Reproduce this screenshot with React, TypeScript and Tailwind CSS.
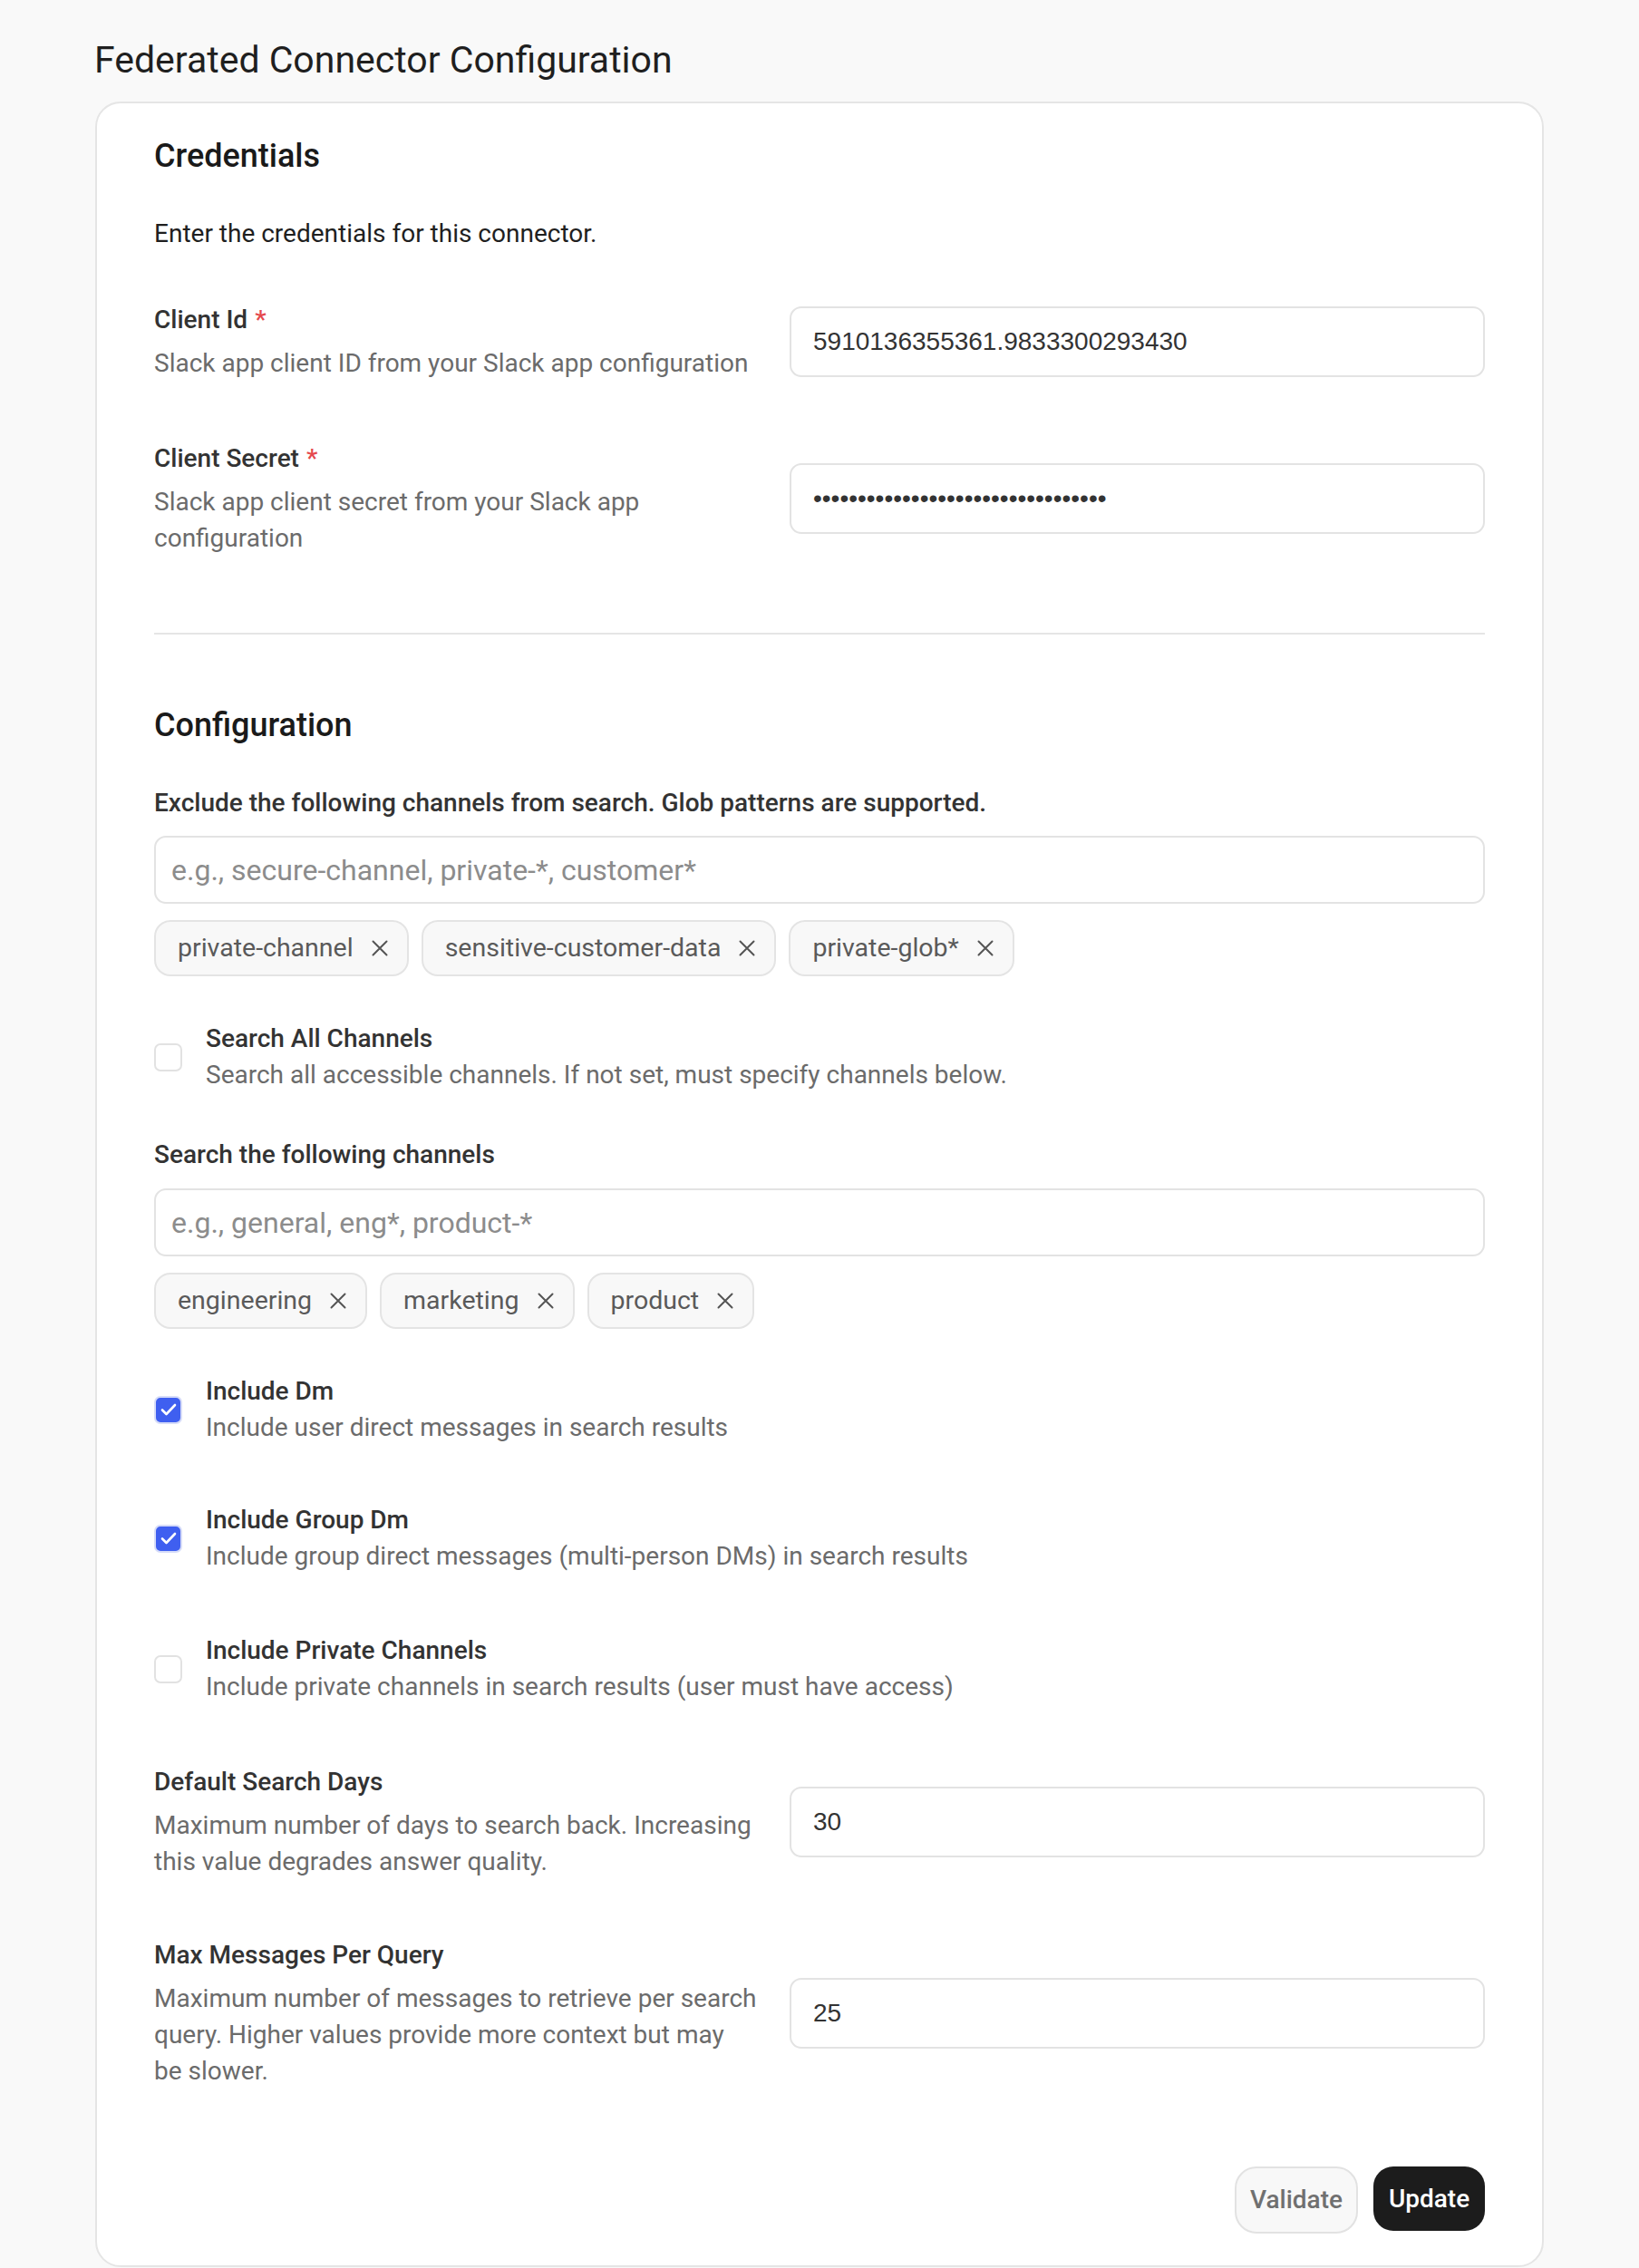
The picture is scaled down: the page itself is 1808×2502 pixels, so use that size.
import React from 'react';

const FONT = "font-['Roboto','Noto_Sans',sans-serif]";

interface FieldRowProps {
  label: string;
  required?: boolean;
  description: string;
  children: React.ReactNode;
}

function FieldRow({ label, required, description, children }: FieldRowProps) {
  return (
    <div className="flex items-center justify-between">
      <div className="w-[680px]">
        <div className="text-[28px] leading-[40px] font-medium text-[#333333]">
          {label}
          {required && <span className="ml-[8px] text-[#e5484d]">*</span>}
        </div>
        <p className="mt-[8px] w-[665px] text-[28px] leading-[40px] text-[#6b6b6b]">{description}</p>
      </div>
      {children}
    </div>
  );
}

function TextBox({ value, type = 'text' }: { value: string; type?: string }) {
  return (
    <input
      readOnly
      type={type}
      value={value}
      className="h-[78px] w-[767px] rounded-[13px] border-2 border-[#e3e3e3] bg-white px-[24px] font-['Liberation_Sans',Arial,sans-serif] text-[28px] text-[#333333] outline-none"
    />
  );
}

function Chip({ label }: { label: string }) {
  return (
    <span className="inline-flex h-[62px] items-center gap-[19px] rounded-[18px] border-2 border-[#e4e4e4] bg-[#f8f8f8] pl-[24px] pr-[20px] text-[28.5px] text-[#5a5a5a]">
      {label}
      <svg width="20" height="20" viewBox="0 0 20 20" fill="none" stroke="#555555" strokeWidth="2" strokeLinecap="round">
        <path d="M2.5 2.5l15 15M17.5 2.5l-15 15" />
      </svg>
    </span>
  );
}

function TagInput({ placeholder, tags }: { placeholder: string; tags: string[] }) {
  return (
    <div>
      <input
        readOnly
        placeholder={placeholder}
        className="h-[75px] w-full rounded-[13px] border-2 border-[#e3e3e3] bg-white px-[17px] text-[32px] text-[#333333] outline-none placeholder:text-[#8c8c8c]"
      />
      <div className="mt-[18px] flex flex-wrap gap-[14px]">
        {tags.map((t) => (
          <Chip key={t} label={t} />
        ))}
      </div>
    </div>
  );
}

function CheckRow({ label, description, checked }: { label: string; description: string; checked?: boolean }) {
  return (
    <div className="flex items-center gap-[26px]">
      {checked ? (
        <span className="flex h-[31px] w-[31px] shrink-0 items-center justify-center rounded-[7px] border-2 border-[#d6dcf8] bg-[#3f5ff0]">
          <svg width="24" height="24" viewBox="0 0 24 24" fill="none" stroke="white" strokeWidth="2.6" strokeLinecap="round" strokeLinejoin="round">
            <path d="M5 12.5l4.5 4.5L19 7" />
          </svg>
        </span>
      ) : (
        <span className="h-[31px] w-[31px] shrink-0 rounded-[7px] border-2 border-[#e2e2e2] bg-white" />
      )}
      <div>
        <div className="text-[28px] leading-[40px] font-medium text-[#333333]">{label}</div>
        <p className="text-[28px] leading-[40px] text-[#6b6b6b]">{description}</p>
      </div>
    </div>
  );
}

export default function App() {
  return (
    <div className={`min-h-screen bg-[#f9f9f9] ${FONT}`}>
      <div className="pl-[104px] pt-[43px]">
        <h1 className="text-[41px] leading-[46px] font-normal text-[#1f1f1f]">Federated Connector Configuration</h1>

        <div className="ml-px mt-[23px] w-[1598px] rounded-[28px] border-2 border-[#e5e5e5] bg-white px-[63px] pt-[38px] pb-[35px]">
          <h2 className="text-[36px] leading-[40px] font-medium text-[#1a1a1a]">Credentials</h2>
          <p className="mt-[46px] text-[28px] leading-[40px] text-[#1f1f1f]">Enter the credentials for this connector.</p>

          <div className="mt-[55px]">
            <FieldRow label="Client Id" required description="Slack app client ID from your Slack app configuration">
              <TextBox value="5910136355361.9833300293430" />
            </FieldRow>
          </div>
          <div className="mt-[65px]">
            <FieldRow label="Client Secret" required description="Slack app client secret from your Slack app configuration">
              <TextBox type="password" value="abcdefghijklmnopqrstuvwxyz0123456" />
            </FieldRow>
          </div>

          <hr className="mt-[84px] border-t-2 border-[#e5e5e5]" />

          <h2 className="mt-[80px] text-[36px] leading-[40px] font-medium text-[#1a1a1a]">Configuration</h2>

          <div className="mt-[46px] text-[28px] leading-[40px] font-medium text-[#333333]">
            Exclude the following channels from search. Glob patterns are supported.
          </div>
          <div className="mt-[16px]">
            <TagInput
              placeholder="e.g., secure-channel, private-*, customer*"
              tags={['private-channel', 'sensitive-customer-data', 'private-glob*']}
            />
          </div>

          <div className="mt-[49px]">
            <CheckRow label="Search All Channels" description="Search all accessible channels. If not set, must specify channels below." />
          </div>

          <div className="mt-[48px] text-[28px] leading-[40px] font-medium text-[#333333]">Search the following channels</div>
          <div className="mt-[17px]">
            <TagInput placeholder="e.g., general, eng*, product-*" tags={['engineering', 'marketing', 'product']} />
          </div>

          <div className="mt-[49px]">
            <CheckRow checked label="Include Dm" description="Include user direct messages in search results" />
          </div>
          <div className="mt-[62px]">
            <CheckRow checked label="Include Group Dm" description="Include group direct messages (multi-person DMs) in search results" />
          </div>
          <div className="mt-[64px]">
            <CheckRow label="Include Private Channels" description="Include private channels in search results (user must have access)" />
          </div>

          <div className="mt-[65px]">
            <FieldRow label="Default Search Days" description="Maximum number of days to search back. Increasing this value degrades answer quality.">
              <TextBox value="30" />
            </FieldRow>
          </div>
          <div className="mt-[63px]">
            <FieldRow
              label="Max Messages Per Query"
              description="Maximum number of messages to retrieve per search query. Higher values provide more context but may be slower."
            >
              <TextBox value="25" />
            </FieldRow>
          </div>

          <div className="mt-[85px] flex justify-end gap-[17px]">
            <button className="h-[74px] w-[136px] rounded-[24px] border-2 border-[#e2e2e2] bg-[#f8f8f8] text-[28px] font-medium text-[#707070]">
              Validate
            </button>
            <button className="h-[71px] w-[123px] rounded-[22px] bg-[#1c1c1c] text-[28px] font-medium text-white">
              Update
            </button>
          </div>
        </div>
      </div>
    </div>
  );
}
